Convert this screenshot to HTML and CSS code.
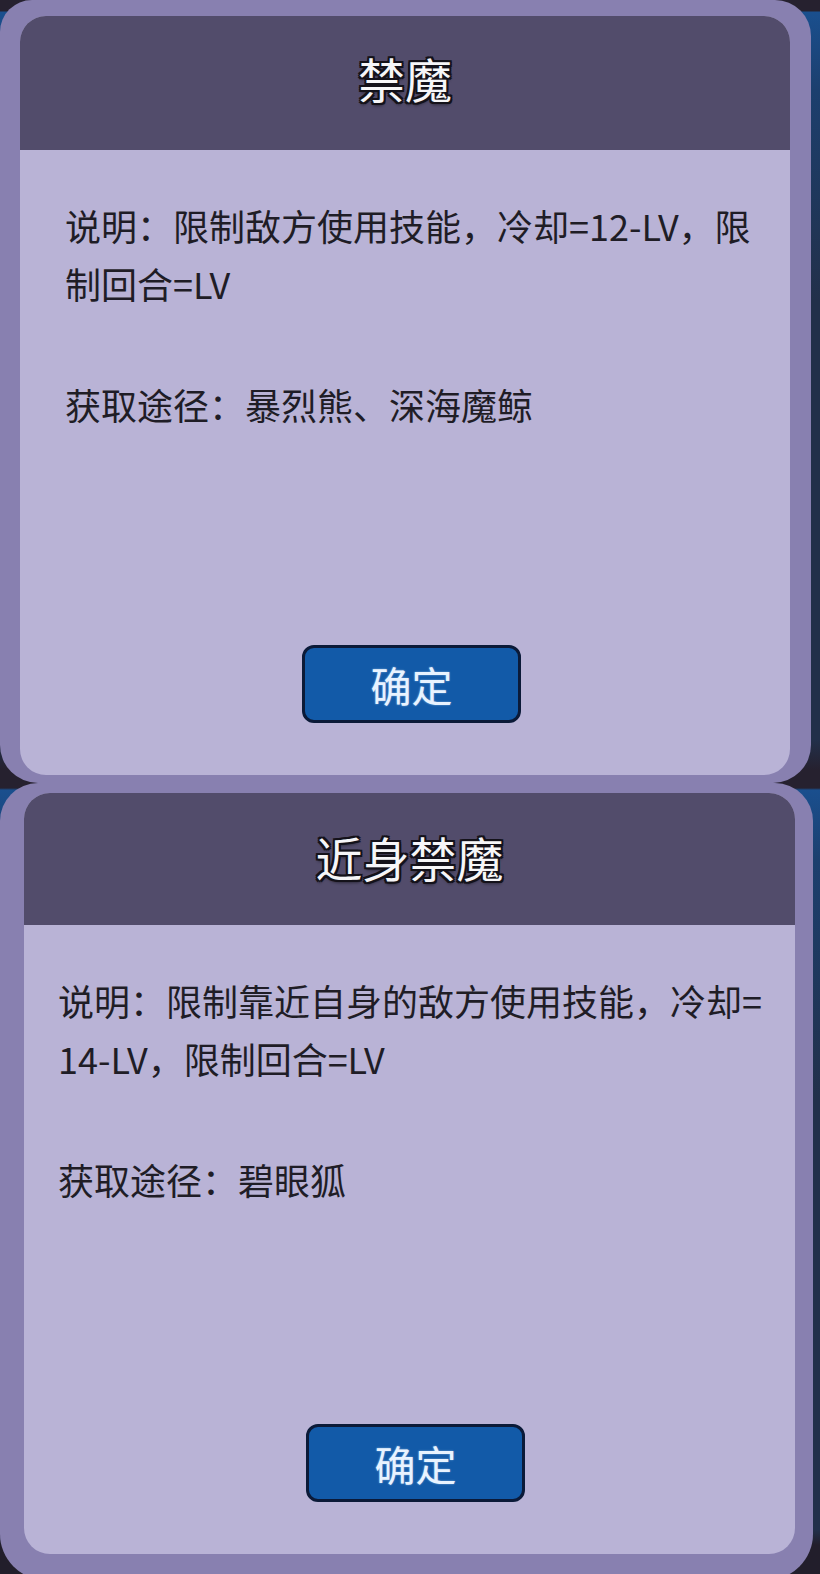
FILE: index.html
```html
<!DOCTYPE html>
<html lang="zh-CN">
<head>
<meta charset="utf-8">
<title>技能说明</title>
<link rel="stylesheet" href="styles.css">
</head>
<body>
<div class="stack">
  <section class="dialog dialog-first">
    <div class="card">
      <header class="card-head head-first"><h2 class="card-title">禁魔</h2></header>
      <div class="card-body body-first">
        <p class="line-group">说明：限制敌方使用技能，冷却=12-LV，限<br>制回合=LV</p>
        <p class="line-group source">获取途径：暴烈熊、深海魔鲸</p>
        <div class="actions"><button class="ok-btn" type="button">确定</button></div>
      </div>
    </div>
  </section>
  <section class="dialog dialog-second">
    <div class="card">
      <header class="card-head head-second"><h2 class="card-title">近身禁魔</h2></header>
      <div class="card-body body-second">
        <p class="line-group">说明：限制靠近自身的敌方使用技能，冷却=<br>14-LV，限制回合=LV</p>
        <p class="line-group source">获取途径：碧眼狐</p>
        <div class="actions"><button class="ok-btn" type="button">确定</button></div>
      </div>
    </div>
  </section>
</div>
</body>
</html>
```

FILE: styles.css
```css
html, body {
  margin: 0;
  padding: 0;
}

/* game scene peeking out behind the dialogs */
body {
  width: 820px;
  height: 1574px;
  overflow: hidden;
  background:
    linear-gradient(to bottom,
      #26212f 0, #26212f 11px,
      #1a4f8e 12px, #1c3f6e 90px, #22304a 300px, #22304a 740px,
      #26212f 770px, #26212f 788px,
      #1a4f8e 790px, #1c3f6e 860px, #22304a 1100px, #22304a 1530px,
      #221e2b 1545px, #221e2b 100%);
  font-family: "Noto Sans CJK SC", "Noto Sans", sans-serif;
  color: #1f1d26;
}

.stack {
  display: flex;
  flex-direction: column;
  width: 820px;
}

/* outer lilac frame of each dialog */
.dialog {
  background: #8880b0;
  display: flex;
  flex-direction: column;
  box-sizing: border-box;
}

.dialog-first {
  width: 811px;
  height: 783px;
  border-radius: 32px 36px 38px 38px;
  padding: 16px 21px 8px 20px;
}

.dialog-second {
  width: 813px;
  height: 797px;
  border-radius: 38px 38px 46px 46px;
  padding: 10px 18px 26px 24px;
}

.card {
  flex: 1;
  display: flex;
  flex-direction: column;
  border-radius: 26px;
  overflow: hidden;
  background: #b9b3d6;
}

.card-head {
  box-sizing: border-box;
  background: #524c6b;
  display: flex;
  align-items: center;
  justify-content: center;
  flex: none;
}

.head-first {
  height: 134px;
  padding-bottom: 12px;
}

.head-second {
  height: 132px;
  padding-bottom: 6px;
}

.card-title {
  margin: 0;
  font-size: 47px;
  font-weight: 400;
  line-height: 1;
  color: #f6f6f8;
  text-shadow:
    2px 0 0 #14121a, -2px 0 0 #14121a, 0 2px 0 #14121a, 0 -2px 0 #14121a,
    2px 2px 0 #14121a, -2px 2px 0 #14121a, 2px -2px 0 #14121a, -2px -2px 0 #14121a,
    0 3px 3px rgba(0, 0, 0, 0.45);
}

.card-body {
  flex: 1;
  display: flex;
  flex-direction: column;
  padding-top: 46px;
}

.body-first {
  padding-left: 45px;
  padding-right: 32px;
}

.body-second {
  padding-left: 34px;
  padding-right: 22px;
}

.line-group {
  margin: 0;
  font-size: 36px;
  line-height: 58px;
  white-space: nowrap;
}

.line-group.source {
  margin-top: 63px;
}

.actions {
  margin-top: auto;
  margin-bottom: 52px;
  display: flex;
  justify-content: center;
}

.ok-btn {
  width: 219px;
  height: 78px;
  box-sizing: border-box;
  border: 3px solid #0b1a38;
  border-radius: 12px;
  background: #125aa8;
  color: #e8f3ff;
  font-family: "Noto Sans CJK SC", "Noto Sans", sans-serif;
  font-size: 41px;
  font-weight: 400;
  line-height: 1;
  padding: 0;
  text-shadow: 0 0 2px rgba(210, 235, 255, 0.6);
}
```
